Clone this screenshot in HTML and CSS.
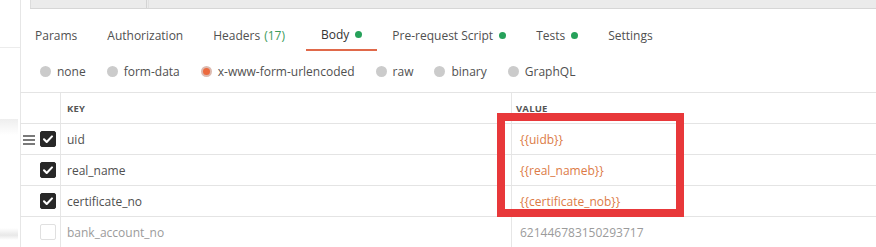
FILE: index.html
```html
<!DOCTYPE html>
<html>
<head>
<meta charset="utf-8">
<link rel="stylesheet" href="styles.css">
</head>
<body>
<div class="app">
  <aside class="sidebar">
    <div class="sb-top"></div>
    <div class="sb-item sb-a"></div>
    <div class="sb-item sb-b"></div>
  </aside>
  <main class="main">
    <div class="urlbar"><div class="method"></div><div class="url"></div></div>
    <nav class="tabs">
      <div class="tab">Params</div>
      <div class="tab">Authorization</div>
      <div class="tab headers">Headers <span class="count">(17)</span></div>
      <div class="tab active">Body<span class="dot"></span></div>
      <div class="tab">Pre-request Script<span class="dot"></span></div>
      <div class="tab">Tests<span class="dot"></span></div>
      <div class="tab">Settings</div>
    </nav>
    <div class="modes">
      <label class="mode"><span class="radio"></span>none</label>
      <label class="mode"><span class="radio"></span>form-data</label>
      <label class="mode"><span class="radio on"></span>x-www-form-urlencoded</label>
      <label class="mode"><span class="radio"></span>raw</label>
      <label class="mode"><span class="radio"></span>binary</label>
      <label class="mode"><span class="radio"></span>GraphQL</label>
    </div>
    <div class="table">
      <div class="row head">
        <div class="c-check"></div>
        <div class="c-key">KEY</div>
        <div class="c-val">VALUE</div>
      </div>
      <div class="row">
        <div class="c-check"><span class="handle"><i></i><i></i><i></i></span><span class="cb on"><svg viewBox="0 0 16 16" width="16" height="16"><path d="M4 8.3l2.7 2.7L12 5.4" fill="none" stroke="#fff" stroke-width="2.1" stroke-linecap="round" stroke-linejoin="round"/></svg></span></div>
        <div class="c-key">uid</div>
        <div class="c-val var">{{uidb}}</div>
      </div>
      <div class="row">
        <div class="c-check"><span class="cb on"><svg viewBox="0 0 16 16" width="16" height="16"><path d="M4 8.3l2.7 2.7L12 5.4" fill="none" stroke="#fff" stroke-width="2.1" stroke-linecap="round" stroke-linejoin="round"/></svg></span></div>
        <div class="c-key">real_name</div>
        <div class="c-val var">{{real_nameb}}</div>
      </div>
      <div class="row">
        <div class="c-check"><span class="cb on"><svg viewBox="0 0 16 16" width="16" height="16"><path d="M4 8.3l2.7 2.7L12 5.4" fill="none" stroke="#fff" stroke-width="2.1" stroke-linecap="round" stroke-linejoin="round"/></svg></span></div>
        <div class="c-key">certificate_no</div>
        <div class="c-val var">{{certificate_nob}}</div>
      </div>
      <div class="row off">
        <div class="c-check"><span class="cb"></span></div>
        <div class="c-key">bank_account_no</div>
        <div class="c-val">621446783150293717</div>
      </div>
      <div class="highlight"></div>
    </div>
  </main>
</div>
</body>
</html>
```

FILE: styles.css
```css
* { box-sizing: border-box; }
html, body { margin: 0; padding: 0; background: #fff; }
body {
  font-family: "Open Sans", "Noto Sans", sans-serif;
  font-size: 12px;
  color: #505050;
  width: 876px;
  height: 247px;
  overflow: hidden;
}
.app { display: flex; height: 247px; }
.sidebar {
  width: 21px;
  flex: none;
  border-right: 1px solid #e6e6e6;
  display: flex;
  flex-direction: column;
}
.sb-top { height: 48px; border-bottom: 1px solid #ececec; }
.sb-item { margin-right: 2px; }
.sb-a { margin-top: 71px; height: 16px; background: linear-gradient(#eeeeee, #ffffff); }
.sb-b { margin-top: 93px; height: 12px; background: linear-gradient(#ffffff, #e8e8e8 60%, #ffffff); }
.main { flex: 1; position: relative; min-width: 0; }
.urlbar {
  margin-left: 9px;
  height: 9px;
  display: flex;
  background: #ebebeb;
  border-bottom: 1px solid #d6d6d6;
}
.method { width: 117px; border-left: 1px solid #dcdcdc; border-right: 1px solid #d3d3d3; }
.url { flex: 1; margin-left: 1px; border-left: 1px solid #e0e0e0; }
.tabs {
  display: flex;
  height: 42px;
  padding-top: 11px;
  align-items: stretch;
}
.tab {
  padding: 0 15px;
  height: 31px;
  line-height: 32px;
  white-space: nowrap;
  display: flex;
  align-items: center;
  color: #505050;
}
.tab:first-child { padding-left: 14px; }
.tab.headers { padding-right: 21px; }
.tab.active { border-bottom: 2px solid #e0694a; color: #333; }
.count { color: #3c9b5a; margin-left: 4px; }
.dot {
  width: 7px; height: 7px; border-radius: 50%;
  background: #26a15a;
  margin-left: 6px;
  display: inline-block;
}
.modes {
  display: flex;
  height: 41px;
  align-items: center;
  padding-left: 19px;
  gap: 21px;
}
.mode { display: flex; align-items: center; gap: 6px; color: #505050; white-space: nowrap; }
.radio {
  width: 11px; height: 11px; border-radius: 50%;
  background: #cbcbcb;
  display: inline-block;
}
.radio.on { background: #ec6a3e; border: 2px solid #dcbab0; }
.table { border-top: 1px solid #e4e4e4; margin-left: -1px; position: relative; }
.row {
  display: flex;
  height: 31px;
  border-bottom: 1px solid #e4e4e4;
  align-items: stretch;
}
.c-check {
  width: 41px;
  flex: none;
  border-left: 1px solid #e6e6e6;
  border-right: 1px solid #e6e6e6;
  display: flex;
  align-items: center;
  justify-content: flex-end;
  padding-right: 4px;
  position: relative;
}
.c-key {
  width: 451px;
  flex: none;
  padding-left: 6px;
  display: flex;
  align-items: center;
  border-right: 1px solid #e6e6e6;
}
.c-val { flex: 1; padding-left: 8px; display: flex; align-items: center; }
.head .c-key, .head .c-val { font-size: 9.5px; font-weight: 700; letter-spacing: 0.2px; color: #555; }
.head .c-val { padding-left: 4px; }
.var { color: #dc7b46; }
.off .c-key, .off .c-val { color: #9b9b9b; }
.cb {
  width: 16px; height: 16px; border-radius: 2px;
  border: 1px solid #e0e0e0;
  display: inline-block;
}
.cb.on { background: #282828; border-color: #282828; }
.cb svg { display: block; margin: -1px; }
.handle {
  position: absolute;
  left: 2px;
  top: 11px;
  width: 12px;
  display: flex;
  flex-direction: column;
  gap: 2px;
}
.handle i { display: block; height: 2px; background: #7a7a7a; }
.highlight {
  position: absolute;
  left: 477px;
  top: 20px;
  width: 187px;
  height: 104px;
  border: 8px solid #e8383a;
}
```
